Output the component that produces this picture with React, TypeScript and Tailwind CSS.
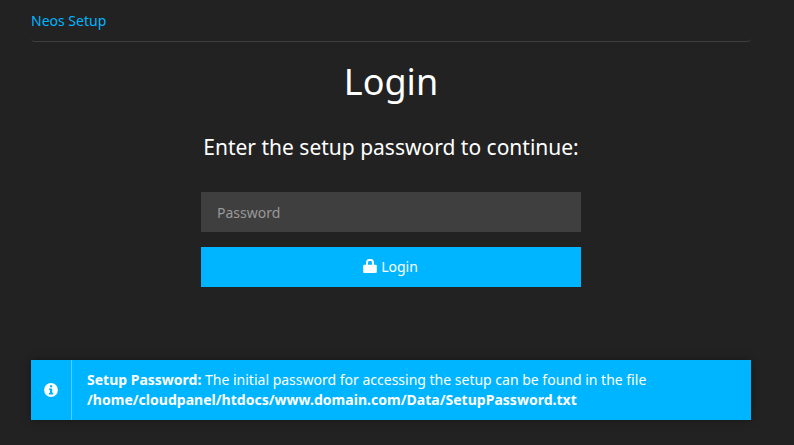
import React from "react";

function LockIcon() {
  return (
    <svg className="mb-0.5" width="14" height="14" viewBox="0 0 14 14" fill="none" aria-hidden="true">
      <path d="M4 6.5V4C4 2.2 4.9 1.1 6.2 1.1h1.6C9.1 1.1 10 2.2 10 4v2.5" stroke="currentColor" strokeWidth="2" />
      <rect x="0.2" y="5.8" width="13.6" height="8.1" rx="1" fill="currentColor" />
    </svg>
  );
}

function InfoIcon() {
  return (
    <svg width="14" height="14" viewBox="0 0 14 14" aria-hidden="true">
      <circle cx="7" cy="7" r="6.9" fill="currentColor" />
      <path d="M6 2.2h2.2v2.1H6zM5 5.4h3.2v4.4h1v1.7H5V9.8h1V7.1H5z" fill="#00b5ff" />
    </svg>
  );
}

export default function App() {
  return (
    <div className="h-[445px] w-[794px] overflow-hidden bg-[#222222] px-[31px] font-['Noto_Sans',sans-serif] text-[14px] leading-5 text-white antialiased">
      <div className="w-[720px]">
        <header className="h-[42px] rounded-b-[4px] border-b border-[#3f3f3f] pt-[11px] text-[#00b5ff]">Neos Setup</header>
        <main className="flex h-[318px] flex-col items-center">
          <h1 className="mt-[20px] text-[36px] leading-10">Login</h1>
          <p className="mt-[30px] text-[21px] leading-[30px]">Enter the setup password to continue:</p>
          <form className="mt-[30px] flex w-[380px] flex-col gap-[15px]">
            <input type="password" placeholder="Password" className="h-10 bg-[#3f3f3f] px-4 text-white outline-none placeholder:text-[#999999]" />
            <button type="button" className="flex h-10 items-center justify-center gap-1 bg-[#00b5ff] pr-px">
              <LockIcon />
              <span>Login</span>
            </button>
          </form>
        </main>
        <aside className="flex h-[60px] bg-[#00b5ff] shadow-[0_0_8px_rgba(0,0,0,0.35)]">
          <div className="flex w-[41px] items-center justify-center border-r border-[#59cfff]">
            <InfoIcon />
          </div>
          <div className="px-[15px] py-[10px]">
            <p><strong>Setup Password:</strong> The initial password for accessing the setup can be found in the file</p>
            <p className="font-bold tracking-[0.02px]">/home/cloudpanel/htdocs/www.domain.com/Data/SetupPassword.txt</p>
          </div>
        </aside>
      </div>
    </div>
  );
}
